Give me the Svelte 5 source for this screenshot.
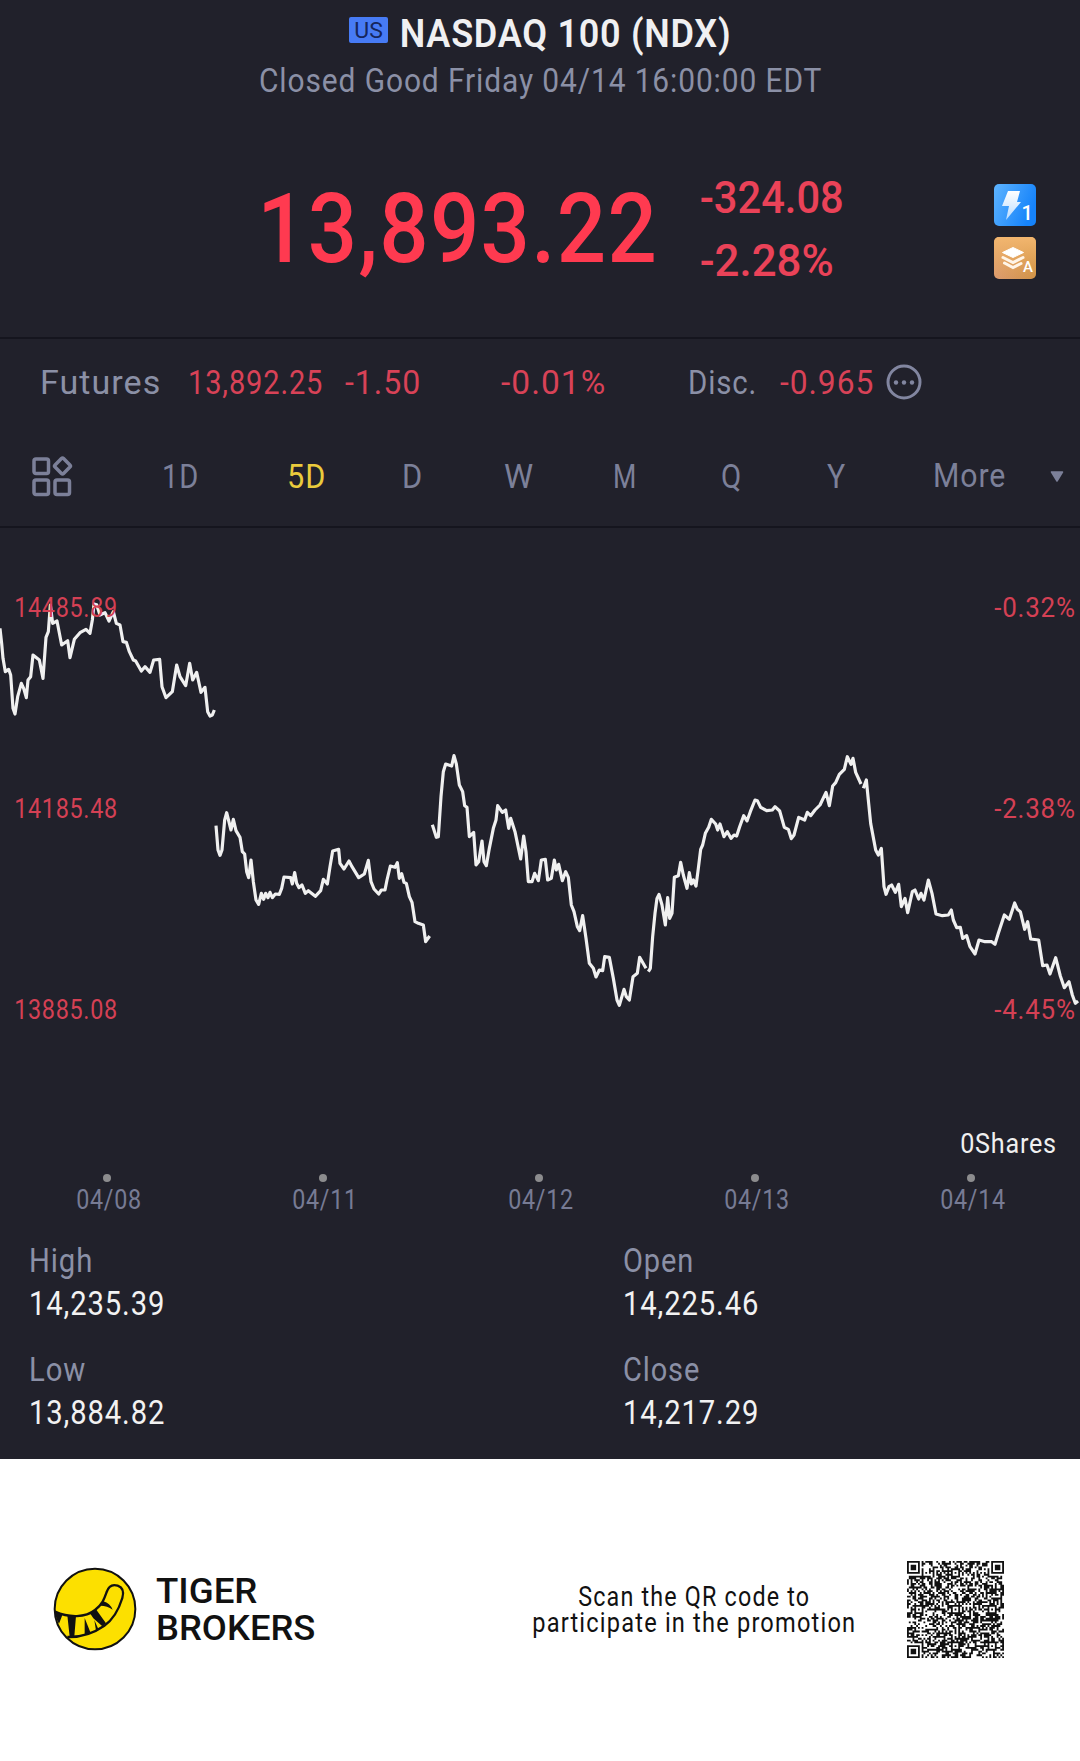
<script lang="ts">
	const tabs = [
		{ name: '1D', width: 34 },
		{ name: '5D', width: 36 },
		{ name: 'D', width: 18 },
		{ name: 'W', width: 27 },
		{ name: 'M', width: 21 },
		{ name: 'Q', width: 18 },
		{ name: 'Y', width: 16 }
	];
	let active = $state('5D');

	const priceLevels = ['14485.89', '14185.48', '13885.08'];
	const percentLevels = ['-0.32%', '-2.38%', '-4.45%'];
	const dates = ['04/08', '04/11', '04/12', '04/13', '04/14'];

	const stats = [
		{ name: 'High', nameWidth: 61, value: '14,235.39' },
		{ name: 'Open', nameWidth: 68, value: '14,225.46' },
		{ name: 'Low', nameWidth: 54, value: '13,884.82' },
		{ name: 'Close', nameWidth: 74, value: '14,217.29' }
	];

	// three units per pixel, each run starts from its own origin
	const runs = [
		{
			x: 0,
			y: 0,
			points:
				'0,145 5,190 9,235 16,275 26,268 32,285 39,385 45,402 53,350 64,310 71,325 79,353 84,300 92,290 99,225 118,240 129,295 138,172 145,155 151,75 158,130 171,123 185,195 203,182 210,233 223,178 240,158 258,148 270,160 277,120 282,72 290,74 300,105 315,98 327,123 340,95 349,130 360,135 369,185 379,187 388,215 400,240 407,243 424,273 435,260 450,277 461,240 479,238 486,320 498,353 517,335 530,255 540,290 557,317 569,250 578,300 590,277 603,337 615,322 623,395 630,408 637,405 643,390'
		},
		{
			x: 600,
			y: 480,
			points:
				'48,257 54,330 60,346 66,330 74,240 80,218 93,270 100,238 108,272 120,292 127,335 134,342 140,395 146,413 153,360 160,425 168,480 176,493 184,460 191,478 197,460 204,473 210,457 217,473 226,462 238,463 245,445 252,411 272,413 277,432 284,398 290,430 297,443 306,435 316,460 325,452 346,469 362,452 370,418 382,432 390,380 398,333 416,328 420,370 432,387 447,363 456,380 476,413 493,402 505,361 513,425 522,447 536,462 544,450 555,450 561,420 571,378 585,382 592,368 598,415 605,401 612,427 619,430 628,470 636,487 645,545 655,550 670,555 677,605 689,588'
		},
		{
			x: 600,
			y: 480,
			points:
				'697,254 709,292 715,290 723,170 730,95 737,72 755,78 762,47 769,72 778,135 788,155 794,197 801,202 808,290 821,277 828,375 836,365 846,303 852,365 859,377 868,325 880,265 888,240 893,197 907,217 917,210 926,265 932,235 945,275 962,357 971,288 978,335 985,425 996,425 1004,400 1015,422 1024,360 1036,358 1043,420 1054,415 1063,360 1069,390 1076,373 1087,422 1097,395 1105,412 1114,495 1122,515 1132,560 1139,572 1148,527 1158,595 1168,670 1180,685 1188,711 1198,690 1208,692 1214,650 1228,652 1240,715 1251,780 1258,796 1272,748 1279,770 1288,780 1299,710 1312,700 1319,652 1338,685'
		},
		{
			x: 1560,
			y: 480,
			points:
				'385,695 391,685 398,590 405,520 411,475 417,463 426,495 436,555 443,473 449,535 456,520 463,412 475,407 482,367 490,405 501,445 508,398 514,432 520,420 528,438 535,385 542,328 548,315 556,280 566,262 574,238 587,252 593,270 600,252 612,290 622,275 633,295 642,285 650,288 659,260 671,227 681,243 691,215 705,180 712,182 722,202 740,212 757,210 765,200 779,213 793,262 805,268 814,296 822,285 836,232 854,240 862,217 872,227 885,210 900,195 918,157 928,197 938,138 947,128 958,103 973,88 982,50 993,73 999,55 1007,97 1023,132'
		},
		{
			x: 2340,
			y: 480,
			points:
				'250,145 259,120 266,190 272,250 287,330 295,345 304,325 312,440 318,463 327,440 335,435 346,457 356,433 364,500 375,475 383,518 397,455 405,450 416,477 423,460 432,480 445,420 456,460 468,522 487,527 505,525 514,510 520,540 530,563 541,562 548,595 560,587 570,620 585,642 597,600 615,605 635,605 645,613 655,580 673,525 688,538 704,489 712,508 721,515 734,568 743,545 752,597 776,600 788,677 801,675 810,702 827,653 841,708 853,743 867,725 877,765 886,790 894,783'
		}
	];

	const QR_SIZE = 53;

	function ring(x: number, y: number, cx: number, cy: number) {
		return Math.max(Math.abs(x - cx), Math.abs(y - cy));
	}

	function buildQr() {
		let seed = 20220414;
		let d = '';
		const far = QR_SIZE - 4;
		for (let y = 0; y < QR_SIZE; y++) {
			for (let x = 0; x < QR_SIZE; x++) {
				seed = (Math.imul(seed, 1664525) + 1013904223) >>> 0;
				let dark = seed / 4294967296 < 0.53;
				if (x === 6 || y === 6) dark = (x + y) % 2 === 0;
				for (const cx of [6, 26, 46]) {
					for (const cy of [6, 26, 46]) {
						const r = ring(x, y, cx, cy);
						if (r <= 2) dark = r !== 1;
					}
				}
				for (const [cx, cy] of [[3, 3], [far, 3], [3, far]]) {
					const r = ring(x, y, cx, cy);
					if (r <= 4) dark = r !== 4 && r !== 2;
				}
				if (dark) d += `M${x} ${y}h1v1h-1z`;
			}
		}
		return d;
	}

	const qr = buildQr();
</script>

<!-- box height is the cap height, so rows line up on the letters -->
{#snippet label(text: string, width: number, cap: number, weight = 400, spacing = 0.03)}
	{@const size = cap / 0.711}
	<svg class="label" {width} height={cap}>
		<text
			x={-0.03 * size}
			y={cap}
			font-size={size}
			font-weight={weight}
			letter-spacing={spacing * size}
			textLength={width + (0.07 + spacing * 0.9) * size}
			lengthAdjust="spacingAndGlyphs">{text}</text
		>
	</svg>
{/snippet}

<main class="share">
	<header class="header">
		<div class="title">
			<span class="market">{@render label('US', 27, 16, 400, 0)}</span>
			{@render label('NASDAQ 100 (NDX)', 328, 28, 600, 0.02)}
		</div>
		<div class="status">{@render label('Closed Good Friday 04/14 16:00:00 EDT', 560, 24)}</div>
	</header>

	<section class="quote">
		<div class="price">{@render label('13,893.22', 393, 68, 500, 0.015)}</div>
		<div class="change">
			{@render label('-324.08', 141, 31, 500, 0)}
			{@render label('-2.28%', 131, 31, 500, 0)}
		</div>
		<div class="badges">
			<svg width="42" height="42" viewBox="0 0 42 42">
				<defs>
					<linearGradient id="blue" x1="0" y1="0" x2="1" y2="0.4">
						<stop offset="0" stop-color="#5eb4ff" />
						<stop offset="1" stop-color="#1683fa" />
					</linearGradient>
					<linearGradient id="bolt" x1="0" y1="0" x2="0" y2="1">
						<stop offset="0" stop-color="#fff" />
						<stop offset="1" stop-color="#b9dcff" />
					</linearGradient>
				</defs>
				<rect width="42" height="42" rx="5" fill="url(#blue)" />
				<path d="M14 7h12l-3 11h4L12 36l3-14H8z" fill="url(#bolt)" />
				<text x="27.500" y="36" font-size="20" font-weight="500" fill="#fff">1</text>
			</svg>
			<svg width="42" height="42" viewBox="0 0 42 42">
				<defs>
					<linearGradient id="gold" x1="0" y1="1" x2="1" y2="0.6">
						<stop offset="0" stop-color="#dc9b70" />
						<stop offset="1" stop-color="#cf913f" />
					</linearGradient>
					<linearGradient id="shine" x1="0" y1="0" x2="0" y2="1">
						<stop offset="0" stop-color="#f2b66f" />
						<stop offset="1" stop-color="#f2b66f" stop-opacity="0" />
					</linearGradient>
				</defs>
				<rect width="42" height="42" rx="5" fill="url(#gold)" />
				<rect width="42" height="42" rx="5" fill="url(#shine)" />
				<path d="M19 10.500l10.500 5-10.500 5-10.500-5z" fill="#fff" stroke="#fff" stroke-linejoin="round" />
				<path
					d="M9 20.500l10 5 10-5M10.500 26l8.500 4.500 8-4"
					fill="none"
					stroke="#fff5e8"
					stroke-width="3"
					stroke-linecap="round"
				/>
				<text x="29" y="34.500" font-size="15" font-weight="500" fill="#fff">A</text>
			</svg>
		</div>
	</section>

	<section class="futures">
		{@render label('Futures', 118, 24)}
		<span class="down">{@render label('13,892.25', 132, 24)}</span>
		<span class="down">{@render label('-1.50', 73, 24)}</span>
		<span class="down">{@render label('-0.01%', 102, 24)}</span>
		{@render label('Disc.', 66, 24)}
		<span class="down">{@render label('-0.965', 91, 24)}</span>
		<svg class="more-info" width="36" height="36" viewBox="0 0 36 36">
			<circle cx="18" cy="18" r="16" fill="none" stroke="currentColor" stroke-width="3" />
			<circle cx="10" cy="18.500" r="2.200" />
			<circle cx="18" cy="18.500" r="2.200" />
			<circle cx="26" cy="18.500" r="2.200" />
		</svg>
	</section>

	<nav class="tabs">
		<svg class="grid-icon" width="42" height="42" viewBox="0 0 42 42">
			<rect x="2" y="3" width="14.500" height="14.500" rx="2" />
			<rect x="2" y="24" width="14.500" height="14.500" rx="2" />
			<rect x="23" y="24" width="14.500" height="14.500" rx="2" />
			<rect x="24.500" y="4" width="12" height="12" rx="1.500" transform="rotate(45 30.500 10)" />
		</svg>
		{#each tabs as tab}
			<button class:active={tab.name === active} onclick={() => (active = tab.name)}>
				{@render label(tab.name, tab.width, 23)}
			</button>
		{/each}
		<button class="more">{@render label('More', 70, 24)}</button>
		<svg class="arrow" width="14" height="11" viewBox="0 0 14 11">
			<path d="M1.500 1h11L7 10z" stroke="currentColor" stroke-width="1.500" stroke-linejoin="round" />
		</svg>
	</nav>

	<section class="chart">
		<svg class="line" width="1080" height="460" viewBox="0 0 3240 1380">
			{#each runs as run}
				<polyline points={run.points} transform="translate({run.x} {run.y})" />
			{/each}
		</svg>
		<div class="levels left">
			{#each priceLevels as level}
				{@render label(level, 101, 19)}
			{/each}
		</div>
		<div class="levels right">
			{#each percentLevels as level}
				{@render label(level, 79, 19)}
			{/each}
		</div>
		<div class="volume">{@render label('0Shares', 94, 19)}</div>
	</section>

	<div class="axis">
		{#each dates as date}
			<div class="day">
				<i></i>
				{@render label(date, 63, 19)}
			</div>
		{/each}
	</div>

	<section class="stats">
		{#each stats as stat}
			<div class="stat">
				<span>{@render label(stat.name, stat.nameWidth, 23)}</span>
				<strong>{@render label(stat.value, 133, 24)}</strong>
			</div>
		{/each}
	</section>

	<footer class="footer">
		<svg class="logo" width="84" height="84" viewBox="39 52 252 252">
			<circle cx="165" cy="178" r="121" fill="#fce000" stroke="#111" stroke-width="6" />
			<path
				d="M45 186C88 205 137 204 165 181C188 163 193 147 200 127C207 106 220 104 233 108C250 114 252 128 247 145C236 181 222 208 193 228C160 251 125 263 82 262"
				fill="none"
				stroke="#111"
				stroke-width="7"
			/>
			<path
				d="M45 184L68 194L57 222Q47 207 45 184zM82 197L108 199L103 260L89 261zM134 205L152 250L134 255zM151 192L169 180L198 221L187 230L160 206zM163 211L176 240L168 243zM181 163L190 155Q210 161 218 180Q202 168 181 168z"
				fill="#111"
			/>
		</svg>
		<div class="brand">
			{@render label('TIGER', 99, 25, 500, 0)}
			{@render label('BROKERS', 157, 25, 500, 0)}
		</div>
		<div class="scan">
			{@render label('Scan the QR code to', 229, 19, 400, 0.05)}
			{@render label('participate in the promotion', 321, 19, 400, 0.05)}
		</div>
		<svg class="qr" width="97" height="97" viewBox="0 0 53 53">
			<path d={qr} />
		</svg>
	</footer>
</main>

<style>
	:global(body) {
		margin: 0;
		background: #fff;
	}
	.share {
		width: 1080px;
		height: 1761px;
		box-sizing: border-box;
		overflow: hidden;
		display: flex;
		flex-direction: column;
		background: #21212b;
		color: #8b90a6;
		font-family: Roboto, 'Liberation Sans', sans-serif;
	}
	svg {
		display: block;
		flex: none;
		fill: currentColor;
	}
	.label {
		overflow: visible;
	}
	.header {
		height: 160px;
		box-sizing: border-box;
		padding-top: 17px;
	}
	.title {
		display: flex;
		gap: 13px;
		padding-left: 349px;
		height: 30px;
		align-items: flex-end;
		color: #f0f0f2;
	}
	.market {
		width: 39px;
		height: 26px;
		margin-bottom: 4px;
		display: flex;
		align-items: center;
		justify-content: center;
		background: #477bf5;
		color: #15265c;
		border-radius: 2px;
	}
	.status {
		padding: 21px 0 0 260px;
	}
	.quote {
		height: 177px;
		box-sizing: border-box;
		display: flex;
		padding-left: 260px;
		color: #ff3a50;
	}
	.price {
		width: 441px;
		padding-top: 34px;
	}
	.change {
		width: 293px;
		padding-top: 22px;
		display: flex;
		flex-direction: column;
		gap: 32px;
		color: #ea4258;
	}
	.badges {
		padding-top: 24px;
		display: flex;
		flex-direction: column;
		gap: 11px;
	}
	.futures {
		display: grid;
		grid-template-columns: 148px 157px 156px 187px 92px 105px auto;
		align-items: center;
		height: 86px;
		padding: 0 0 2px 41px;
		border-top: 2px solid #15151e;
	}
	.down {
		color: #d84257;
	}
	.more-info {
		color: #8286a0;
	}
	.tabs {
		display: grid;
		grid-template-columns: 131px 125px 115px 102px 109px 108px 106px 106px 116px auto;
		align-items: center;
		height: 99px;
		padding-left: 32px;
		color: #7c8099;
		border-bottom: 2px solid #15151e;
	}
	.tabs button {
		padding: 0;
		border: 0;
		background: none;
		color: inherit;
		font: inherit;
		cursor: pointer;
	}
	.tabs button.active {
		color: #eacb3c;
	}
	.tabs .more {
		margin-top: -3px;
	}
	.grid-icon rect {
		fill: none;
		stroke: currentColor;
		stroke-width: 3.5;
	}
	.chart {
		position: relative;
		height: 645px;
	}
	.line {
		padding-top: 52px;
	}
	.line polyline {
		fill: none;
		stroke: #f0f0f0;
		stroke-width: 9.5;
		stroke-linejoin: round;
	}
	.levels {
		position: absolute;
		top: 70px;
		display: flex;
		flex-direction: column;
		gap: 182px;
		color: #d44054;
	}
	.left {
		left: 15px;
	}
	.right {
		right: 6px;
	}
	.volume {
		position: absolute;
		right: 25px;
		bottom: 20px;
		color: #f0f0f0;
	}
	.axis {
		display: grid;
		grid-template-columns: repeat(5, 216px);
		height: 76px;
		color: #777b94;
	}
	.day {
		display: flex;
		flex-direction: column;
		align-items: center;
		gap: 8px;
		padding-top: 1px;
	}
	.day i {
		width: 8px;
		height: 8px;
		margin-right: 2px;
		border-radius: 50%;
		background: #8c8c8e;
	}
	.stats {
		display: grid;
		grid-template-columns: 594px auto;
		grid-auto-rows: 109px;
		height: 210px;
		padding-left: 30px;
	}
	.stat {
		display: flex;
		flex-direction: column;
		gap: 19px;
	}
	.stat strong {
		color: #f2f2f2;
	}
	.footer {
		flex: 1;
		display: flex;
		align-items: flex-start;
		padding: 102px 0 0 53px;
		background: #fff;
		color: #111;
	}
	.logo {
		margin-top: 6px;
	}
	.brand {
		display: flex;
		flex-direction: column;
		gap: 12px;
		padding: 17px 0 0 20px;
		width: 359px;
	}
	.scan {
		display: flex;
		flex-direction: column;
		align-items: center;
		gap: 7px;
		width: 355px;
		padding-top: 26px;
	}
	.qr {
		margin-left: 36px;
	}
</style>
